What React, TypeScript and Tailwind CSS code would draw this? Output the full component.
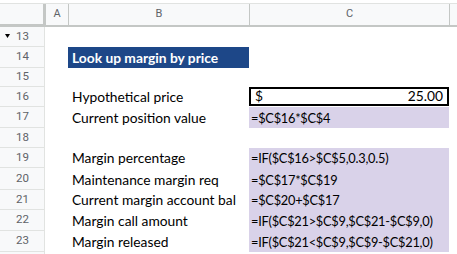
import { FC } from "react";

// One spreadsheet row: number, label in column B, value in column C
interface SheetRow {
  num: number;
  h: number;
  label?: string;
  formula?: string;
  title?: boolean;
  price?: boolean;
}

const rows: SheetRow[] = [
  { num: 13, h: 20 },
  { num: 14, h: 21, label: "Look up margin by price", title: true },
  { num: 15, h: 19 },
  { num: 16, h: 20, label: "Hypothetical price", price: true },
  { num: 17, h: 21, label: "Current position value", formula: "=$C$16*$C$4" },
  { num: 18, h: 20 },
  { num: 19, h: 20, label: "Margin percentage", formula: "=IF($C$16>$C$5,0.3,0.5)" },
  { num: 20, h: 22, label: "Maintenance margin req", formula: "=$C$17*$C$19" },
  { num: 21, h: 20, label: "Current margin account bal", formula: "=$C$20+$C$17" },
  { num: 22, h: 21, label: "Margin call amount", formula: "=IF($C$21>$C$9,$C$21-$C$9,0)" },
  { num: 23, h: 21, label: "Margin released", formula: "=IF($C$21<$C$9,$C$9-$C$21,0)" },
  { num: 24, h: 21 },
];

const cellFont = { fontFamily: "Lato, 'Open Sans', sans-serif" };

const App: FC = () => {
  return (
    <div className="w-[457px] h-[254px] overflow-hidden bg-white">
      <div className="h-[3px] bg-white" />
      {/* Column header */}
      <div className="flex h-[24px] bg-[#f8f9fa] border-t border-[#e1e3e1] text-[11px] text-[#5f6368] font-['Roboto',sans-serif]">
        <div className="w-[46px] shrink-0 border-r-[3px] border-b-[3px] border-[#c4c7c5]" />
        <div className="w-[23px] shrink-0 flex items-center justify-center border-r border-b-2 border-[#c4c7c5]">A</div>
        <div className="w-[181px] shrink-0 flex items-center justify-center border-r border-b-2 border-[#c4c7c5]">B</div>
        <div className="w-[200px] shrink-0 flex items-center justify-center border-r border-b-2 border-[#c4c7c5]">C</div>
        <div className="flex-1 border-b-2 border-[#c4c7c5]" />
      </div>

      {rows.map((r) => (
        <div key={r.num} className="flex" style={{ height: r.h }}>
          <div className="w-[45px] shrink-0 relative flex items-center justify-center bg-[#f8f9fa] border-r border-b border-[#e1e3e1] text-[11.5px] text-[#5f6368] font-['Roboto',sans-serif]">
            {r.num === 13 && (
              <svg className="absolute left-[5px] top-[7px]" width="5" height="4" viewBox="0 0 5 4">
                <path d="M0 0 L5 0 L2.5 4 Z" fill="#000" />
              </svg>
            )}
            <span className="pl-[1px]">{r.num}</span>
          </div>
          <div className="w-[23px] shrink-0" />
          <div
            className={`w-[181px] shrink-0 flex items-end pb-[2px] pl-[4px] text-[13.8px] leading-none ${
              r.title ? "bg-[#1d4788] text-white font-bold" : "text-black"
            }`}
            style={cellFont}
          >
            {r.label && <span className="pb-[1px] whitespace-nowrap">{r.label}</span>}
          </div>
          <div className="w-[200px] shrink-0 flex" style={cellFont}>
            {r.price && (
              <div className="flex-1 mb-[1px] border-2 border-black flex items-end justify-between px-[4px] pb-[1px] text-[13.8px] leading-none text-black">
                <span>$</span>
                <span>25.00</span>
              </div>
            )}
            {r.formula && (
              <div className="flex-1 bg-[#d9d2e9] flex items-end pl-[2px] pb-[3px] text-[12.8px] tracking-[-0.25px] leading-none text-black whitespace-nowrap overflow-hidden">
                {r.formula}
              </div>
            )}
          </div>
          <div className="flex-1" />
        </div>
      ))}
    </div>
  );
};

export default App;
